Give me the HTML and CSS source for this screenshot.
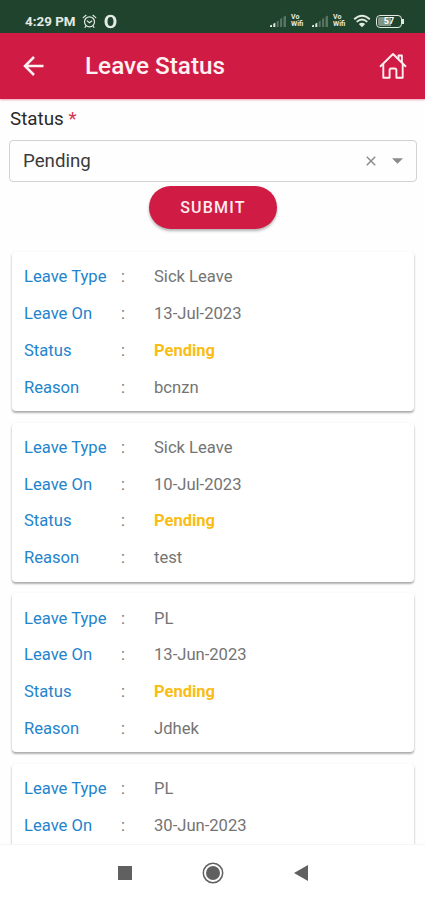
FILE: index.html
```html
<!DOCTYPE html>
<html lang="en">
<head>
<meta charset="utf-8">
<title>Leave Status</title>
<link rel="stylesheet" href="styles.css">
</head>
<body>
<div class="statusbar">
  <span class="time">4:29 PM</span>
  <svg class="alarm" width="15" height="15" viewBox="0 0 15 15" fill="none" stroke="currentColor" stroke-width="1.200" stroke-linecap="round"><circle cx="7.500" cy="7.800" r="5"/><path d="M1.200 3.600L4 1.300M13.800 3.600L11 1.300M5.300 7l2.200 1.800L9.800 7M4 12l-1 1.300M11 12l1 1.300"/></svg>
  <svg class="ring" width="13" height="15" viewBox="0 0 13 15" fill="currentColor" fill-rule="evenodd"><path d="M6.500.8C10.500.8 12.500 3.900 12.500 7.500S10.500 14.200 6.500 14.200.5 11.100.5 7.500 2.500.8 6.500.8zM6.500 3C4.400 3 3.500 5 3.500 7.500s.9 4.500 3 4.500 3-2 3-4.500-.9-4.500-3-4.500z"/></svg>
  <span class="spacer"></span>
  <svg class="signal" width="17" height="12" viewBox="0 0 17 12" fill="currentColor"><path d="M0 12v-1.500l2-.8V12zM3.300 12V8.800l2-1V12z"/><path opacity=".3" d="M6.700 12V6.600l2-1V12zM10.100 12V4l2-1.200V12zM13.500 12V1.800l2.500-1.300V12z"/></svg>
  <span class="vowifi"><span>Vo</span><span>Wifi</span></span>
  <svg class="signal second" width="17" height="12" viewBox="0 0 17 12" fill="currentColor"><path d="M0 12v-1.500l2-.8V12zM3.300 12V8.800l2-1V12z"/><path opacity=".3" d="M6.700 12V6.600l2-1V12zM10.100 12V4l2-1.200V12zM13.500 12V1.800l2.500-1.300V12z"/></svg>
  <span class="vowifi"><span>Vo</span><span>Wifi</span></span>
  <svg class="wifi" width="18" height="14" viewBox="0 0 18 14" fill="none" stroke="currentColor" stroke-width="1.900"><path d="M1.200 5.200Q9-1.800 16.800 5.200M3.700 7.900Q9 3.200 14.300 7.900"/><path d="M5.800 10L9 13.200l3.200-3.200Q9 7.600 5.800 10z" fill="currentColor" stroke="none"/></svg>
  <span class="battery"><span class="battery-level">57</span></span>
</div>
<header class="appbar">
  <svg class="back" width="22" height="20" viewBox="0 0 22 20" fill="none" stroke="currentColor" stroke-width="2.500"><path d="M20.500 10H2.500M11 1L2 10l9 9"/></svg>
  <h1>Leave Status</h1>
  <svg class="home" width="28" height="28" viewBox="0 0 28 28" fill="none" stroke="currentColor" stroke-width="1.900" stroke-linejoin="round" stroke-linecap="round"><path d="M1.500 14.200L14 2l12.500 12.200"/><path d="M4.300 12.500V25.700H10.600V18.200q0-1.700 1.700-1.700h3.400q1.700 0 1.700 1.700V25.700H23.700V12.500"/><path d="M19.500 6.600V3.500h3.400V10"/></svg>
</header>
<main class="content">
  <label class="field-label">Status <span class="required">*</span></label>
  <div class="select">
    <span class="select-value">Pending</span>
    <svg width="10" height="10" viewBox="0 0 10 10" stroke="currentColor" stroke-width="1.500"><path d="M.8.8l8.400 8.400M9.200.8L.8 9.200"/></svg>
    <svg class="caret" width="11" height="6" viewBox="0 0 11 6" fill="currentColor"><path d="M0 .3h11L5.500 5.800z"/></svg>
  </div>
  <button class="submit">SUBMIT</button>
  <div class="cards">
    <dl class="card">
      <dt>Leave Type</dt><i>:</i><dd>Sick Leave</dd>
      <dt>Leave On</dt><i>:</i><dd>13-Jul-2023</dd>
      <dt>Status</dt><i>:</i><dd class="pending">Pending</dd>
      <dt>Reason</dt><i>:</i><dd>bcnzn</dd>
    </dl>
    <dl class="card">
      <dt>Leave Type</dt><i>:</i><dd>Sick Leave</dd>
      <dt>Leave On</dt><i>:</i><dd>10-Jul-2023</dd>
      <dt>Status</dt><i>:</i><dd class="pending">Pending</dd>
      <dt>Reason</dt><i>:</i><dd>test</dd>
    </dl>
    <dl class="card">
      <dt>Leave Type</dt><i>:</i><dd>PL</dd>
      <dt>Leave On</dt><i>:</i><dd>13-Jun-2023</dd>
      <dt>Status</dt><i>:</i><dd class="pending">Pending</dd>
      <dt>Reason</dt><i>:</i><dd>Jdhek</dd>
    </dl>
    <dl class="card">
      <dt>Leave Type</dt><i>:</i><dd>PL</dd>
      <dt>Leave On</dt><i>:</i><dd>30-Jun-2023</dd>
    </dl>
  </div>
</main>
<nav class="navbar">
  <svg width="14" height="14" viewBox="0 0 14 14"><path d="M0 0h14v14H0z" fill="currentColor"/></svg>
  <svg width="22" height="22" viewBox="0 0 22 22"><circle cx="11" cy="11" r="9.700" fill="none" stroke="currentColor" stroke-width="1.500"/><circle cx="11" cy="11" r="7" fill="currentColor"/></svg>
  <svg width="14" height="16" viewBox="0 0 14 16"><path d="M14 0v16L0 8z" fill="currentColor"/></svg>
</nav>
</body>
</html>
```
FILE: styles.css
```css
* { box-sizing: border-box; }
body {
  margin: 0;
  height: 900px;
  display: flex;
  flex-direction: column;
  overflow: hidden;
  background: #fefefe;
  font-family: Roboto, "Liberation Sans", sans-serif;
}
svg { display: block; flex: none; }
.statusbar {
  flex: none;
  height: 33px;
  padding: 9px 21px 0 25px;
  display: flex;
  align-items: center;
  background: #1f432d;
  color: #e3eae4;
}
.time { font-size: 13.400px; font-weight: 700; width: 57px; white-space: nowrap; }
.ring { margin-left: 7px; }
.spacer { flex: 1; }
.vowifi {
  width: 16px;
  margin-left: 4px;
  font-size: 7px;
  line-height: 7px;
  font-weight: 700;
  display: flex;
  flex-direction: column;
}
.signal.second { margin-left: 5px; }
.wifi { margin-left: 4px; }
.battery {
  position: relative;
  width: 26px;
  height: 13px;
  margin: 0 2px 0 5px;
  padding: 1px;
  border: 1px solid currentColor;
  border-radius: 4px;
}
.battery::after {
  content: "";
  position: absolute;
  right: -3px;
  top: 3px;
  width: 2px;
  height: 5px;
  background: currentColor;
}
.battery-level {
  display: block;
  height: 9px;
  border-radius: 2px;
  background: linear-gradient(90deg, #7f9686 57%, transparent 57%);
  color: #fff;
  font-size: 9px;
  line-height: 9px;
  font-weight: 700;
  text-align: center;
}
.appbar {
  flex: none;
  height: 66px;
  padding: 0 18px 0 23px;
  display: flex;
  align-items: center;
  background: #d01c45;
  color: #fff0f2;
  box-shadow: 0 1px 2px rgba(208, 28, 69, .4);
}
.appbar h1 {
  flex: 1;
  margin: 0 0 0 40px;
  padding-bottom: 2px;
  font-size: 24.300px;
  font-weight: 500;
}
.content {
  flex: none;
  height: 745px;
  overflow: hidden;
  display: flex;
  flex-direction: column;
  padding: 9px 8px 0 9px;
}
.field-label { flex: none; height: 32px; padding-left: 1px; font-size: 18.800px; line-height: 23px; color: #292929; }
.required { color: #db3452; }
.select {
  flex: none;
  height: 42px;
  display: flex;
  align-items: center;
  padding: 0 13px;
  border: 1px solid #d2d2d2;
  border-radius: 4px;
  color: #8b8b8b;
}
.select-value { flex: 1; font-size: 18.700px; color: #3b3b3b; }
.caret { margin-left: 16px; }
.submit {
  flex: none;
  align-self: center;
  width: 128px;
  height: 43px;
  margin: 4px 0 22px;
  padding: 0;
  border: 0;
  border-radius: 22px;
  background: #d01c45;
  color: #ffeaee;
  font: 500 16px Roboto, sans-serif;
  letter-spacing: 1.200px;
  box-shadow: 0 2px 3px rgba(0, 0, 0, .3);
}
.cards { flex: none; display: flex; flex-direction: column; gap: 11.600px; padding: 1px 3px 0; }
.card {
  flex: none;
  height: 159px;
  margin: 0;
  padding: 6.600px 12px 0;
  display: grid;
  grid-template-columns: 97px 33px 1fr;
  grid-auto-rows: 36.700px;
  align-items: center;
  align-content: start;
  border-radius: 4px;
  background: #fff;
  box-shadow: 0 2px 2px rgba(0, 0, 0, .26), 0 1px 3px rgba(0, 0, 0, .12);
  font-size: 16.600px;
  color: #747474;
}
.card dt { color: #2484cc; }
.card i { font-style: normal; }
.card dd { margin: 0; }
.card .pending { color: #f9bd16; font-size: 16.500px; font-weight: 700; }
.navbar {
  flex: 1;
  display: flex;
  align-items: center;
  gap: 70px;
  padding: 0 0 0 118px;
  border-top: 1px solid #f5f5f5;
  background: #fff;
  color: #606060;
}
```
